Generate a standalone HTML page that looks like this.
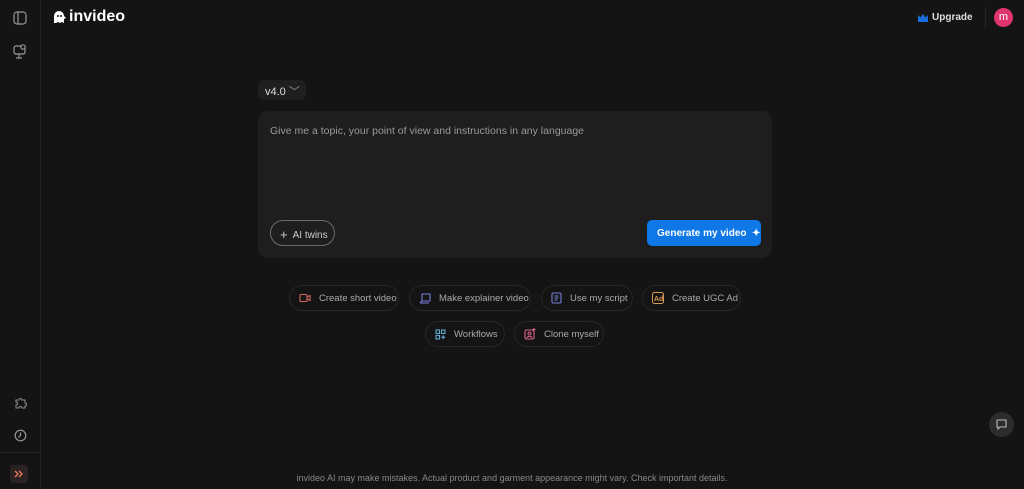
<!DOCTYPE html>
<html><head><meta charset="utf-8"><style>
*{box-sizing:border-box;margin:0;padding:0}
body{width:1024px;height:489px;background:#141414;font-family:"Liberation Sans",sans-serif;color:#ddd;position:relative;overflow:hidden}
.side{position:absolute;left:0;top:0;width:41px;height:489px;border-right:1px solid #232323}
.hr{position:absolute;left:0;top:452px;width:41px;border-top:1px solid #232323}
.ic{position:absolute}
.logo{position:absolute;left:52px;top:8px;font-size:16px;font-weight:bold;color:#fff;display:flex;align-items:center;gap:3px}
.upg{position:absolute;left:918px;top:12px;font-size:10px;font-weight:bold;color:#ddd;display:flex;align-items:center;gap:4px}
.vline{position:absolute;left:985px;top:7px;height:22px;border-left:1px solid #262626}
.av{position:absolute;left:994px;top:8px;width:19px;height:19px;border-radius:50%;background:#e0336f;color:#fff;font-size:11px;text-align:center;line-height:18px}
.ver{position:absolute;left:258px;top:80px;width:48px;height:20px;background:#1f1f1f;border-radius:6px;font-size:11px;color:#ddd;padding:3px 0 0 7px}
.card{position:absolute;left:258px;top:111px;width:514px;height:147px;background:#1e1e1e;border-radius:10px}
.ph{position:absolute;left:12px;top:14px;font-size:10.5px;color:#9a9a9a}
.tw{position:absolute;left:12px;top:109px;width:65px;height:26px;border:1px solid #6a6a6a;border-radius:13px;font-size:10px;color:#ccc;padding:5px 0 0 9px}
.gen{position:absolute;left:389px;top:109px;width:114px;height:26px;background:#0f78e6;border-radius:5px;font-size:10px;font-weight:bold;color:#fff;padding:8px 0 0 10px}
.chip{position:absolute;height:26px;border:1px solid #262626;border-radius:13px;font-size:9.5px;color:#aaa;display:flex;align-items:center;padding-left:9px;gap:8px;white-space:nowrap}
.foot{position:absolute;left:0;width:1024px;top:473px;text-align:center;font-size:9px;color:#888}
.chat{position:absolute;left:989px;top:412px;width:25px;height:25px;border-radius:50%;background:#2c2c2c}
</style></head><body>
<div class="side"></div><div class="hr"></div>
<svg class="ic" style="left:13px;top:11px" width="14" height="14" viewBox="0 0 14 14" fill="none" stroke="#999" stroke-width="1.2"><rect x="1" y="1" width="12" height="12" rx="3"/><line x1="5" y1="1" x2="5" y2="13"/></svg>
<svg class="ic" style="left:13px;top:44px" width="14" height="15" viewBox="0 0 14 15" fill="none" stroke="#999" stroke-width="1.2"><rect x="1" y="2" width="11" height="8" rx="2"/><line x1="6" y1="10" x2="6" y2="14"/><line x1="3" y1="14" x2="9" y2="14"/><circle cx="10" cy="3" r="2.2" fill="#141414"/></svg>
<svg class="ic" style="left:14px;top:396px" width="13" height="13" viewBox="0 0 13 13" fill="none" stroke="#888" stroke-width="1.1"><path d="M2 4h3a1.5 1.5 0 1 1 3 0h3v3a1.5 1.5 0 1 1 0 3v2H8a1.5 1.5 0 1 0-3 0H2V9a1.5 1.5 0 1 0 0-3z"/></svg>
<svg class="ic" style="left:14px;top:429px" width="13" height="13" viewBox="0 0 13 13" fill="none" stroke="#999" stroke-width="1.2"><circle cx="6.5" cy="6.5" r="5.3"/><path d="M6.5 3.5v3l-2 2"/></svg>
<div style="position:absolute;left:10px;top:465px;width:18px;height:18px;border-radius:4px;background:#2b2222"></div>
<svg class="ic" style="left:14px;top:470px" width="10" height="8" viewBox="0 0 10 8" fill="none" stroke="#f07a5a" stroke-width="1.3"><path d="M1 1l3 3-3 3M5 1l3 3-3 3"/></svg>
<div class="logo"><svg width="14" height="14" viewBox="0 0 14 14"><path d="M2 13V6a5 5 0 0 1 10 0l2 2-2 1v4l-2-1-2 1-2-1-2 1z" fill="#fff"/><circle cx="6" cy="6" r="1" fill="#141414"/><circle cx="9" cy="6" r="1" fill="#141414"/></svg>invideo</div>
<div class="upg"><svg width="10" height="8" viewBox="0 0 10 8"><path d="M0 1l2.5 2.5L5 0l2.5 3.5L10 1v7H0z" fill="#1a6fe0"/></svg>Upgrade</div>
<div class="vline"></div>
<div class="av">m</div>
<div class="ver">v4.0 <span style="color:#999">﹀</span></div>
<div class="card">
<div class="ph">Give me a topic, your point of view and instructions in any language</div>
<div class="tw"><span style="font-size:13px;position:relative;top:1px">+</span>&nbsp; AI twins</div>
<div class="gen">Generate my video &nbsp;✦</div>
</div>
<div class="chip" style="left:289px;top:285px;width:110px"><svg width="12" height="10" viewBox="0 0 12 10" fill="none" stroke="#d26a5f" stroke-width="1.1"><rect x="1" y="1.5" width="7" height="7" rx="1"/><path d="M8 4l3-1.5v5L8 6"/></svg>Create short video</div>
<div class="chip" style="left:409px;top:285px;width:122px"><svg width="12" height="11" viewBox="0 0 12 11" fill="none" stroke="#7a7ed8" stroke-width="1.1"><path d="M3 1h8v7H3zM1 10h9M3 8L1 10"/></svg>Make explainer video</div>
<div class="chip" style="left:541px;top:285px;width:92px"><svg width="11" height="12" viewBox="0 0 11 12" fill="none" stroke="#7a7ed8" stroke-width="1.1"><rect x="1" y="1" width="9" height="10" rx="1.5"/><path d="M3.5 4h4M3.5 6h4M3.5 8h3"/></svg>Use my script</div>
<div class="chip" style="left:642px;top:285px;width:99px"><svg width="12" height="12" viewBox="0 0 12 12"><rect x="0.5" y="0.5" width="11" height="11" rx="2" fill="none" stroke="#d89a52"/><text x="2" y="9" font-size="7" font-weight="bold" fill="#d89a52" font-family="Liberation Sans">Ad</text></svg>Create UGC Ad</div>
<div class="chip" style="left:425px;top:321px;width:80px"><svg width="11" height="11" viewBox="0 0 11 11" fill="none" stroke="#5fa8d0" stroke-width="1.1"><rect x="1" y="1" width="3.5" height="3.5"/><rect x="6.5" y="1" width="3.5" height="3.5"/><rect x="1" y="6.5" width="3.5" height="3.5"/><path d="M8.2 6.2v4M6.2 8.2h4"/></svg>Workflows</div>
<div class="chip" style="left:514px;top:321px;width:90px"><svg width="12" height="12" viewBox="0 0 12 12" fill="none" stroke="#d8608a" stroke-width="1.1"><rect x="1" y="2" width="9" height="9" rx="1.5"/><circle cx="5.5" cy="5.5" r="1.5"/><path d="M3 10c0-2 5-2 5 0M10 0v3M8.5 1.5h3"/></svg>Clone myself</div>
<div class="chat"><svg style="position:absolute;left:7px;top:7px" width="11" height="11" viewBox="0 0 11 11" fill="none" stroke="#bbb" stroke-width="1.1"><path d="M1 1h9v7H4l-2 2V8H1z"/></svg></div>
<div class="foot">invideo AI may make mistakes. Actual product and garment appearance might vary. Check important details.</div>
</body></html>
